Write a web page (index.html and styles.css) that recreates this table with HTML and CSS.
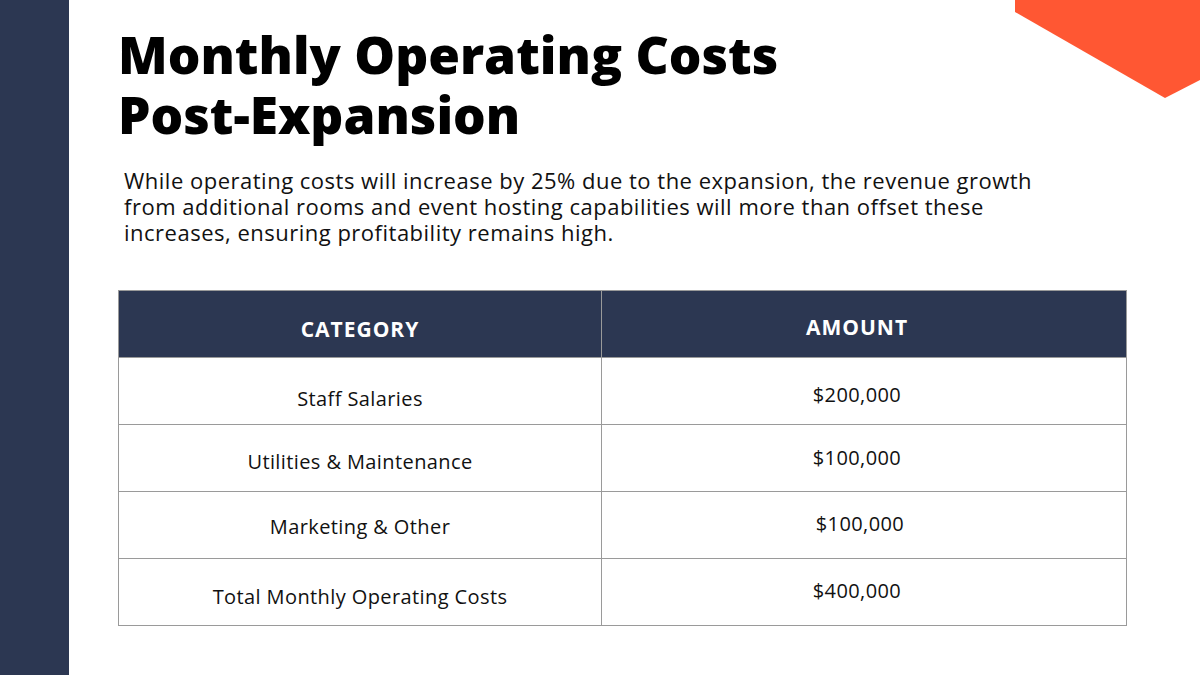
FILE: index.html
```html
<!DOCTYPE html>
<html>
<head>
<meta charset="utf-8">
<link rel="stylesheet" href="styles.css">
</head>
<body>
<div class="slide">
  <aside class="sidebar"></aside>
  <main class="content">
    <h1 class="title">Monthly Operating Costs<br>Post-Expansion</h1>
    <p class="lead">While operating costs will increase by 25% due to the expansion, the revenue growth from additional rooms and event hosting capabilities will more than offset these increases, ensuring profitability remains high.</p>
    <table class="costs">
      <thead>
        <tr class="rh"><th class="c-cat">CATEGORY</th><th class="c-amt">AMOUNT</th></tr>
      </thead>
      <tbody>
        <tr class="r1"><td class="c-cat">Staff Salaries</td><td class="c-amt">$200,000</td></tr>
        <tr class="r2"><td class="c-cat">Utilities &amp; Maintenance</td><td class="c-amt">$100,000</td></tr>
        <tr class="r3"><td class="c-cat">Marketing &amp; Other</td><td class="c-amt">$100,000</td></tr>
        <tr class="r4"><td class="c-cat">Total Monthly Operating Costs</td><td class="c-amt">$400,000</td></tr>
      </tbody>
    </table>
  </main>
  <svg class="corner" width="185" height="100" viewBox="0 0 185 100"><polygon points="0,0 185,0 185,80 150,98 0,12" fill="#ff5733"/></svg>
</div>
</body>
</html>
```
FILE: styles.css
```css
* { box-sizing: border-box; }
html, body { margin: 0; padding: 0; }
body { background: #fff; font-family: "Open Sans", "DejaVu Sans", sans-serif; color: #000; }
.slide { position: relative; width: 1200px; height: 675px; display: flex; overflow: hidden; background: #fff; }
.sidebar { width: 69px; flex: none; background: #2c3752; }
.content { flex: 1; padding: 24px 0 0 49px; }
.title { margin: 0; font-size: 51.4px; line-height: 60px; font-weight: 800; letter-spacing: 0; color: #000; }
.lead { margin: 23px 0 0 6px; width: 940px; font-size: 22px; line-height: 26px; letter-spacing: 0.5px; color: #111; }
.costs { margin-top: 45px; width: 1009px; border-collapse: collapse; table-layout: fixed; }
.costs th, .costs td { border: 1px solid #9a9a9a; text-align: center; padding: 0; }
.costs .c-cat { width: 483px; }
.costs .c-amt { padding-right: 14px; }
.costs th { background: #2c3752; color: #fff; font-weight: 700; font-size: 21px; letter-spacing: 1px; height: 67px; }
.costs th.c-amt { border-left-color: #222a3d; }
.costs td { height: 67px; font-size: 20px; letter-spacing: 0.4px; color: #111; }
.rh .c-cat { padding-top: 10px; }
.rh .c-amt { padding-top: 6px; }
.r1 .c-cat { padding-top: 15px; }
.r1 .c-amt { padding-top: 7px; }
.r2 .c-cat { padding-top: 7px; }
.r2 .c-amt { padding-bottom: 1px; }
.r3 .c-cat { padding-top: 3px; }
.r3 .c-amt { padding-bottom: 3px; padding-right: 8px; }
.r4 .c-cat { padding-top: 9px; }
.r4 .c-amt { padding-bottom: 3px; }
.corner { position: absolute; top: 0; right: 0; }
```
